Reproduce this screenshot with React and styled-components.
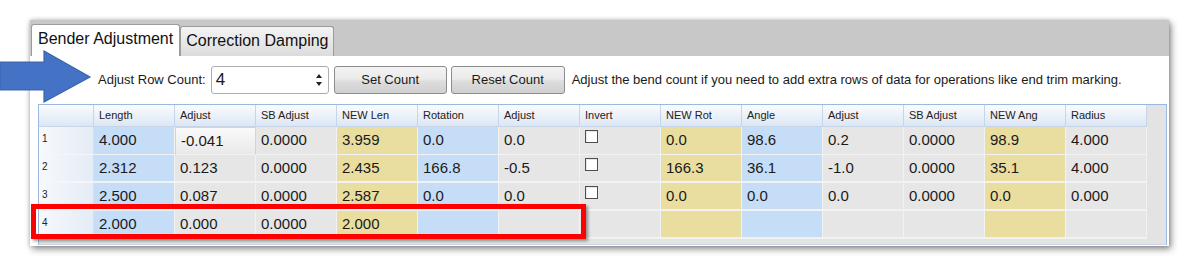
import styled, { createGlobalStyle } from "styled-components"

const GlobalStyle = createGlobalStyle`
  html, body { margin: 0; padding: 0; background: #ffffff; }
  body { font-family: "Liberation Sans", Arial, sans-serif; color: #1a1a1a; }
`

const columns = [
  { title: "Length", kind: "blue" },
  { title: "Adjust", kind: "gray" },
  { title: "SB Adjust", kind: "gray" },
  { title: "NEW Len", kind: "yellow" },
  { title: "Rotation", kind: "blue" },
  { title: "Adjust", kind: "gray" },
  { title: "Invert", kind: "gray" },
  { title: "NEW Rot", kind: "yellow" },
  { title: "Angle", kind: "blue" },
  { title: "Adjust", kind: "gray" },
  { title: "SB Adjust", kind: "gray" },
  { title: "NEW Ang", kind: "yellow" },
  { title: "Radius", kind: "gray" },
]

// "box" = checkbox cell
const rows = [
  ["4.000", "-0.041", "0.0000", "3.959", "0.0", "0.0", "box", "0.0", "98.6", "0.2", "0.0000", "98.9", "4.000"],
  ["2.312", "0.123", "0.0000", "2.435", "166.8", "-0.5", "box", "166.3", "36.1", "-1.0", "0.0000", "35.1", "4.000"],
  ["2.500", "0.087", "0.0000", "2.587", "0.0", "0.0", "box", "0.0", "0.0", "0.0", "0.0000", "0.0", "0.000"],
  ["2.000", "0.000", "0.0000", "2.000", "", "", "", "", "", "", "", "", ""],
]

const cellColors = {
  blue: "#C6DDF8",
  gray: "#E6E6E6",
  yellow: "#E9DE9F",
}

export default function App() {
  return (
    <Page>
      <GlobalStyle />
      <Window>
        <TabStrip>
          <Tab active>Bender Adjustment</Tab>
          <Tab>Correction Damping</Tab>
        </TabStrip>
        <Content>
          <Toolbar>
            <Label>Adjust Row Count:</Label>
            <SpinBox>
              <span>4</span>
              <Spinner>
                <svg width="8" height="16" viewBox="0 0 8 16">
                  <path d="M1 6 L4 2 L7 6 Z" fill="#222" />
                  <path d="M1 10 L4 14 L7 10 Z" fill="#222" />
                </svg>
              </Spinner>
            </SpinBox>
            <Button width={113}>Set Count</Button>
            <Button width={114}>Reset Count</Button>
            <Hint>Adjust the bend count if you need to add extra rows of data for operations like end trim marking.</Hint>
          </Toolbar>
          <Grid>
            <HeaderRow>
              <HeaderCell />
              {columns.map((c, i) => (
                <HeaderCell key={i}>{c.title}</HeaderCell>
              ))}
              <Filler />
            </HeaderRow>
            {rows.map((r, ri) => (
              <Row key={ri} short={ri === 3}>
                <RowHead>{ri + 1}</RowHead>
                {r.map((v, ci) => (
                  <Cell key={ci} kind={columns[ci].kind} current={ri === 0 && ci === 1}>
                    {v === "box" ? <CheckBox /> : v}
                  </Cell>
                ))}
                <Filler />
              </Row>
            ))}
          </Grid>
        </Content>
      </Window>

      <Arrow width="92" height="56" viewBox="0 0 92 56">
        <path d="M0 12 L44 12 L44 1 L90 27 L44 52 L44 40 L0 40 Z" fill="#4472C4" stroke="#3A64AE" strokeWidth="1.2" />
      </Arrow>
      <Highlight />
    </Page>
  )
}

const Page = styled.div`
  position: relative;
  width: 1189px;
  height: 266px;
  padding-top: 20px;
  box-sizing: border-box;
  overflow: hidden;
`

const Window = styled.div`
  margin-left: 30px;
  width: 1139px;
  height: 226px;
  background: #C8C8C8;
  box-shadow: 2px 3px 7px rgba(0, 0, 0, 0.45), 0 0 4px rgba(0, 0, 0, 0.2);
  display: flex;
  flex-direction: column;
`

const TabStrip = styled.div`
  height: 36px;
  display: flex;
  align-items: flex-end;
  padding-left: 1px;
  flex-shrink: 0;
`

const Tab = styled.div`
  box-sizing: border-box;
  height: ${p => (p.active ? "32px" : "30px")};
  padding: ${p => (p.active ? "3px 6px 0 6px" : "3px 5px 0 5px")};
  font-size: 16px;
  line-height: 22px;
  color: #111;
  border: 1px solid #9C9C9C;
  border-bottom: none;
  border-radius: 3px 3px 0 0;
  background: ${p => (p.active ? "#FFFFFF" : "linear-gradient(#F4F4F4, #DCDCDC)")};
  margin-bottom: ${p => (p.active ? "0" : "0")};
`

const Content = styled.div`
  flex: 1;
  background: #FFFFFF;
  display: flex;
  flex-direction: column;
`

const Toolbar = styled.div`
  height: 48px;
  display: flex;
  align-items: center;
  padding-left: 68px;
  padding-bottom: 1px;
  box-sizing: border-box;
  flex-shrink: 0;
`

const Label = styled.span`
  font-size: 13px;
  color: #1a1a1a;
  margin-right: 5px;
`

const SpinBox = styled.div`
  box-sizing: border-box;
  width: 118px;
  height: 28px;
  border: 1px solid #ABADB3;
  border-radius: 3px;
  display: flex;
  align-items: center;
  justify-content: space-between;
  padding: 0 5px 0 4px;
  font-size: 17px;
  margin-right: 5px;
`

const Spinner = styled.div`
  display: flex;
  align-items: center;
`

const Button = styled.div`
  box-sizing: border-box;
  width: ${p => p.width}px;
  height: 28px;
  margin-right: 4px;
  border: 1px solid #8C8C8C;
  border-radius: 3px;
  background: linear-gradient(#F3F3F3 0%, #EBEBEB 45%, #DDDDDD 55%, #CFCFCF 100%);
  display: flex;
  align-items: center;
  justify-content: center;
  font-size: 13px;
  color: #1a1a1a;
`

const Hint = styled.span`
  font-size: 13px;
  margin-left: 3px;
  color: #1a1a1a;
  white-space: nowrap;
`

const Grid = styled.div`
  margin-left: 8px;
  width: 1129px;
  height: 141px;
  box-sizing: border-box;
  border: 1px solid #9DB8DD;
  border-bottom-color: #C9D6E8;
  background: #E3E3E3;
  display: flex;
  flex-direction: column;
`

const template = "55px repeat(13, 81px) 1fr"

const HeaderRow = styled.div`
  display: grid;
  grid-template-columns: ${template};
  height: 22px;
  flex-shrink: 0;
`

const HeaderCell = styled.div`
  box-sizing: border-box;
  background: linear-gradient(#FAFCFE, #DCE7F5);
  border-right: 1px solid #C7D5E8;
  border-bottom: 1px solid #C7D5E8;
  font-size: 11px;
  line-height: 20px;
  padding-left: 5px;
  color: #222;
  white-space: nowrap;
  overflow: hidden;
`

const Filler = styled.div`
  background: #E3E3E3;
`

const Row = styled.div`
  display: grid;
  grid-template-columns: ${template};
  height: ${p => (p.short ? "23px" : "28px")};
  flex-shrink: 0;
`

const RowHead = styled.div`
  box-sizing: border-box;
  background: linear-gradient(90deg, #F7F9FC, #E4ECF6);
  border-right: 1px solid #D5DFEC;
  border-bottom: 2px solid #F4F6F9;
  font-size: 10px;
  padding: 6px 0 0 3px;
  color: #222;
`

const Cell = styled.div`
  box-sizing: border-box;
  background: ${p => (p.current ? "linear-gradient(#FAFAFA, #E9E9E9)" : cellColors[p.kind])};
  border-right: 1px solid #F2F2F2;
  border-bottom: 2px solid #F2F2F2;
  ${p => (p.current ? "border: 1px solid #D4D4D4; border-bottom: 2px solid #F2F2F2;" : "")}
  font-size: 15px;
  line-height: 26px;
  padding-left: 5px;
  color: #1a1a1a;
  white-space: nowrap;
`

const CheckBox = styled.div`
  width: 11px;
  height: 11px;
  margin-top: 3px;
  border: 1px solid #4F4F4F;
  background: #FFFFFF;
  box-shadow: inset 1px 1px 1px rgba(0, 0, 0, 0.1);
`

const Arrow = styled.svg`
  position: absolute;
  left: 0;
  top: 50px;
`

const Highlight = styled.div`
  position: absolute;
  left: 31px;
  top: 204px;
  width: 555px;
  height: 35px;
  box-sizing: border-box;
  border: 5px solid #FF0000;
  box-shadow: 2px 2px 3px rgba(0, 0, 0, 0.4);
`
